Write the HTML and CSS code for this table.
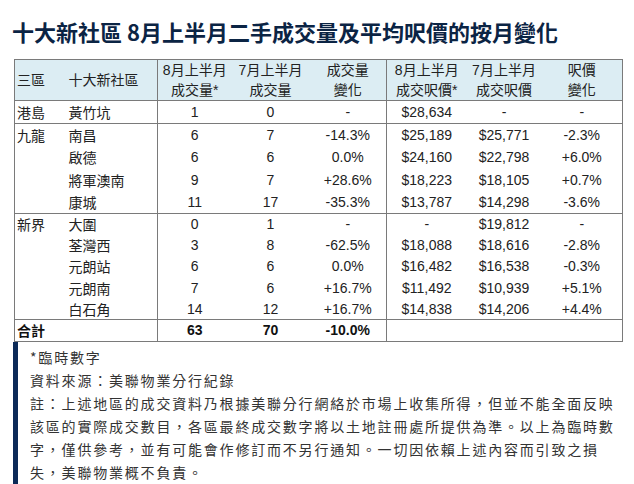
FILE: index.html
```html
<!DOCTYPE html>
<html lang="zh-Hant">
<head>
<meta charset="utf-8">
<title>十大新社區 8月上半月二手成交量及平均呎價的按月變化</title>
<link rel="stylesheet" href="styles.css">
</head>
<body>
<h1 class="title">十大新社區 8月上半月二手成交量及平均呎價的按月變化</h1>
<table class="data">
  <colgroup>
    <col class="c1"><col class="c2"><col class="c3"><col class="c4"><col class="c5"><col class="c6"><col class="c7"><col class="c8">
  </colgroup>
  <thead>
    <tr class="head">
      <th class="left">三區</th>
      <th class="left sec-end">十大新社區</th>
      <th>8月上半月<br>成交量*</th>
      <th>7月上半月<br>成交量</th>
      <th class="sec-end">成交量<br>變化</th>
      <th>8月上半月<br>成交呎價*</th>
      <th>7月上半月<br>成交呎價</th>
      <th>呎價<br>變化</th>
    </tr>
  </thead>
  <tbody class="g-hk">
    <tr><td class="left">港島</td><td class="left sec-end">黃竹坑</td><td>1</td><td>0</td><td class="sec-end">-</td><td>$28,634</td><td>-</td><td>-</td></tr>
  </tbody>
  <tbody class="g-kln">
    <tr class="first"><td class="left">九龍</td><td class="left sec-end">南昌</td><td>6</td><td>7</td><td class="sec-end">-14.3%</td><td>$25,189</td><td>$25,771</td><td>-2.3%</td></tr>
    <tr><td class="left"></td><td class="left sec-end">啟德</td><td>6</td><td>6</td><td class="sec-end">0.0%</td><td>$24,160</td><td>$22,798</td><td>+6.0%</td></tr>
    <tr><td class="left"></td><td class="left sec-end">將軍澳南</td><td>9</td><td>7</td><td class="sec-end">+28.6%</td><td>$18,223</td><td>$18,105</td><td>+0.7%</td></tr>
    <tr class="last"><td class="left"></td><td class="left sec-end">康城</td><td>11</td><td>17</td><td class="sec-end">-35.3%</td><td>$13,787</td><td>$14,298</td><td>-3.6%</td></tr>
  </tbody>
  <tbody class="g-nt">
    <tr><td class="left">新界</td><td class="left sec-end">大圍</td><td>0</td><td>1</td><td class="sec-end">-</td><td>-</td><td>$19,812</td><td>-</td></tr>
    <tr><td class="left"></td><td class="left sec-end">荃灣西</td><td>3</td><td>8</td><td class="sec-end">-62.5%</td><td>$18,088</td><td>$18,616</td><td>-2.8%</td></tr>
    <tr><td class="left"></td><td class="left sec-end">元朗站</td><td>6</td><td>6</td><td class="sec-end">0.0%</td><td>$16,482</td><td>$16,538</td><td>-0.3%</td></tr>
    <tr><td class="left"></td><td class="left sec-end">元朗南</td><td>7</td><td>6</td><td class="sec-end">+16.7%</td><td>$11,492</td><td>$10,939</td><td>+5.1%</td></tr>
    <tr><td class="left"></td><td class="left sec-end">白石角</td><td>14</td><td>12</td><td class="sec-end">+16.7%</td><td>$14,838</td><td>$14,206</td><td>+4.4%</td></tr>
  </tbody>
  <tbody class="g-total">
    <tr><td class="left total-label sec-end" colspan="2">合計</td><td class="bold">63</td><td class="bold">70</td><td class="bold sec-end">-10.0%</td><td></td><td></td><td></td></tr>
  </tbody>
</table>
<div class="note">
  <p>*臨時數字</p>
  <p>資料來源：美聯物業分行紀錄</p>
  <p>註：上述地區的成交資料乃根據美聯分行網絡於市場上收集所得，但並不能全面反映該區的實際成交數目，各區最終成交數字將以土地註冊處所提供為準。以上為臨時數字，僅供參考，並有可能會作修訂而不另行通知。一切因依賴上述內容而引致之損失，美聯物業概不負責。</p>
</div>
</body>
</html>
```

FILE: styles.css
```css
html, body {
  margin: 0;
  padding: 0;
  background: #ffffff;
}

body {
  width: 634px;
  height: 484px;
  overflow: hidden;
  font-family: "Liberation Sans", "Noto Sans CJK TC", sans-serif;
}

.title {
  margin: 16px 0 0 12px;
  font-family: "Noto Sans CJK TC", "Noto Sans", sans-serif;
  font-size: 22px;
  line-height: 30px;
  font-weight: 700;
  color: #0b2444;
  white-space: nowrap;
}

.data {
  margin: 13px 0 0 14px;
  width: 608px;
  table-layout: fixed;
  border-collapse: collapse;
  border: 1px solid #7a7a7a;
  font-size: 14px;
  color: #222222;
}

.c1 { width: 54px; }
.c2 { width: 89px; }
.c3 { width: 74px; }
.c4 { width: 78px; }
.c5 { width: 77px; }
.c6 { width: 80px; }
.c7 { width: 75px; }
.c8 { width: 81px; }

.data th,
.data td {
  padding: 0;
  text-align: center;
  vertical-align: middle;
  white-space: nowrap;
  font-weight: 400;
}

.data .left {
  text-align: left;
}

.data td.left:first-child,
.data th.left:first-child {
  padding-left: 2px;
}

.data .sec-end {
  border-right: 1px solid #7a7a7a;
}

.head {
  background: #dcedf3;
  height: 40px;
}

.head th {
  line-height: 20px;
  color: #222222;
}

.data tbody {
  border-top: 1px solid #7a7a7a;
}

.g-hk tr { height: 23px; }
.g-kln tr { height: 22.5px; }
.g-nt tr { height: 21.2px; }
.g-total tr { height: 22px; }

.data .bold,
.data .total-label {
  font-weight: 700;
  color: #111111;
}

.note {
  margin: 0 0 0 13px;
  width: 592px;
  border-left: 5px solid #0c2a58;
  padding: 4px 0 6px 12px;
  background: #ffffff;
  font-family: "Noto Sans CJK TC", "Liberation Sans", sans-serif;
  font-size: 14px;
  line-height: 23px;
  letter-spacing: 1.8px;
  color: #333333;
}

.note p {
  margin: 0;
}
```
